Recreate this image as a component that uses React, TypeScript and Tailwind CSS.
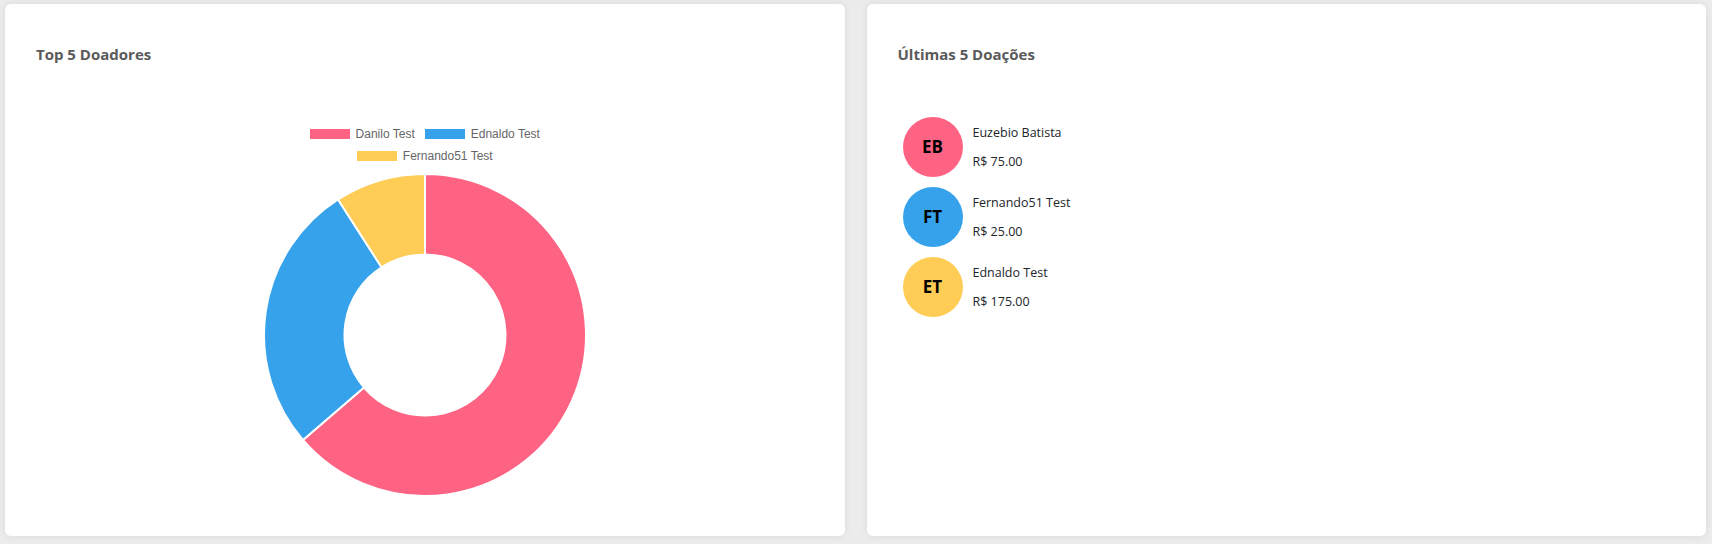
import React from 'react';

interface Donor {
  name: string;
  value: number;
  color: string;
}

interface Donation {
  initials: string;
  name: string;
  amount: string;
  color: string;
}

const donors: Donor[] = [
  { name: 'Danilo Test', value: 400, color: '#ff6384' },
  { name: 'Ednaldo Test', value: 171, color: '#36a2eb' },
  { name: 'Fernando51 Test', value: 57, color: '#ffcd56' },
];

const donations: Donation[] = [
  { initials: 'EB', name: 'Euzebio Batista', amount: 'R$ 75.00', color: '#ff6384' },
  { initials: 'FT', name: 'Fernando51 Test', amount: 'R$ 25.00', color: '#36a2eb' },
  { initials: 'ET', name: 'Ednaldo Test', amount: 'R$ 175.00', color: '#ffcd56' },
];

const titleFont = { fontFamily: '"Open Sans", "Noto Sans", sans-serif' };

// arc path for one donut slice, angles in degrees clockwise from top
function slicePath(cx: number, cy: number, r: number, ir: number, a0: number, a1: number) {
  const rad = (a: number) => ((a - 90) * Math.PI) / 180;
  const p = (radius: number, a: number) =>
    `${cx + radius * Math.cos(rad(a))} ${cy + radius * Math.sin(rad(a))}`;
  const large = a1 - a0 > 180 ? 1 : 0;
  return [
    `M ${p(r, a0)}`,
    `A ${r} ${r} 0 ${large} 1 ${p(r, a1)}`,
    `L ${p(ir, a1)}`,
    `A ${ir} ${ir} 0 ${large} 0 ${p(ir, a0)}`,
    'Z',
  ].join(' ');
}

function Doughnut({ data }: { data: Donor[] }) {
  const total = data.reduce((s, d) => s + d.value, 0);
  let start = 0;
  return (
    <svg width={330} height={330} viewBox="0 0 330 330">
      {data.map((d) => {
        const end = start + (d.value / total) * 360;
        const path = slicePath(165, 165, 161, 80.5, start, end);
        start = end;
        return <path key={d.name} d={path} fill={d.color} stroke="#fff" strokeWidth={2} />;
      })}
    </svg>
  );
}

function LegendItem({ donor }: { donor: Donor }) {
  return (
    <div className="flex items-center gap-[6px]">
      <span className="w-10 h-[10px]" style={{ backgroundColor: donor.color }} />
      <span className="text-[12px] text-[#666]">{donor.name}</span>
    </div>
  );
}

function Card({ title, children }: { title: string; children: React.ReactNode }) {
  return (
    <div className="flex-1 bg-white rounded-md shadow-[0_0_8px_rgba(0,0,0,0.08)] pt-[38px] px-[31px]">
      <h2 className="h-6 leading-6 text-[15px] font-bold text-[#5a5a5a]" style={titleFont}>
        {title}
      </h2>
      {children}
    </div>
  );
}

export default function App() {
  return (
    <div
      className="w-[1712px] h-[544px] bg-[#ececec] flex gap-[22px] pt-1 pl-[5px] pr-[6px] pb-2"
      style={{ fontFamily: '"Liberation Sans", Arial, sans-serif' }}
    >
      <Card title="Top 5 Doadores">
        <div className="flex flex-col items-center mt-[57px]">
          <div className="flex h-[22px] items-center gap-[10px]">
            <LegendItem donor={donors[0]} />
            <LegendItem donor={donors[1]} />
          </div>
          <div className="flex h-[22px] items-center">
            <LegendItem donor={donors[2]} />
          </div>
          <div className="mt-[3px]">
            <Doughnut data={donors} />
          </div>
        </div>
      </Card>

      <Card title="Últimas 5 Doações">
        <div className="flex flex-col gap-[10px] mt-[51px] pl-[5px]">
          {donations.map((d) => (
            <div key={d.name} className="flex items-start gap-[10px]">
              <div
                className="w-[60px] h-[60px] rounded-full flex items-center justify-center text-[17px] font-bold text-black"
                style={{ backgroundColor: d.color, ...titleFont }}
              >
                {d.initials}
              </div>
              <div className="flex flex-col text-[12.5px] text-[#212529]" style={titleFont}>
                <span className="mt-[7px] leading-[18px]">{d.name}</span>
                <span className="mt-[11px] leading-[18px]">{d.amount}</span>
              </div>
            </div>
          ))}
        </div>
      </Card>
    </div>
  );
}
